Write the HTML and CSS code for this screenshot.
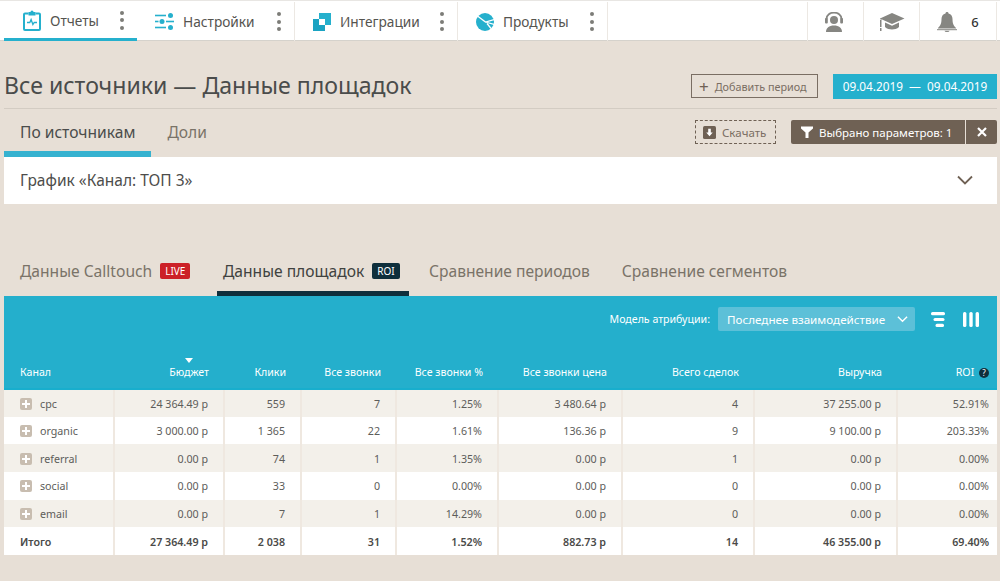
FILE: index.html
```html
<!DOCTYPE html>
<html lang="ru">
<head>
  <meta charset="UTF-8">
  <title>Все источники — Данные площадок</title>
  <link rel="stylesheet" href="styles.css">
</head>
<body>

  <!-- Top menu -->
  <nav class="topbar">
    <div class="menu-item menu-active w-reports">
      <svg class="menu-icon" viewBox="0 0 18 21" width="18" height="21"><path d="M5.500 3.500H2a1 1 0 0 0-1 1V19a1 1 0 0 0 1 1h14a1 1 0 0 0 1-1V4.500a1 1 0 0 0-1-1h-3.500" fill="none" stroke="#25b0cd" stroke-width="2"/><path d="M5.500 2h2a1.500 1.500 0 0 1 3 0h2v3.500h-7z" fill="#25b0cd"/><path d="M4 12.500h2.800l1.300-3 1.800 5 1.300-2h2.800" fill="none" stroke="#25b0cd" stroke-width="1.300"/></svg>
      <span class="menu-label">Отчеты</span>
      <span class="dots"><i></i><i></i><i></i></span>
    </div>
    <div class="menu-item w-settings">
      <svg class="menu-icon" viewBox="0 0 19 17" width="19" height="17"><g fill="#25b0cd"><rect x="0" y="1.700" width="11" height="1.600"/><circle cx="15.500" cy="2.500" r="2.500"/><rect x="0" y="7.700" width="3.500" height="1.600"/><circle cx="7" cy="8.500" r="2.500"/><rect x="11" y="7.700" width="8" height="1.600"/><rect x="0" y="13.700" width="11" height="1.600"/><circle cx="15.500" cy="14.500" r="2.500"/></g></svg>
      <span class="menu-label">Настройки</span>
      <span class="dots"><i></i><i></i><i></i></span>
    </div>
    <div class="menu-item w-integr">
      <svg class="menu-icon" viewBox="0 0 18 18" width="18" height="18"><path d="M6 0h12v12h-6V6H6z" fill="#25b0cd"/><path d="M0 6h6v6h6v6H0z" fill="#1aa3c2"/></svg>
      <span class="menu-label">Интеграции</span>
      <span class="dots"><i></i><i></i><i></i></span>
    </div>
    <div class="menu-item w-products">
      <svg class="menu-icon" viewBox="0 0 18 18" width="18" height="18"><circle cx="9" cy="9" r="9" fill="#25b0cd"/><path d="M1.500 3 9.500 9 18 6.500M9.500 9 18 11.500M11 10.500 15.500 16" fill="none" stroke="#fff" stroke-width="1.300"/></svg>
      <span class="menu-label">Продукты</span>
      <span class="dots"><i></i><i></i><i></i></span>
    </div>
    <div class="menu-spacer"></div>
    <div class="menu-tool menu-agent">
      <svg viewBox="0 0 20 20" width="20" height="20"><g fill="#868682"><circle cx="10" cy="8" r="4"/><path d="M2 20c0-4 3-6.500 8-6.500s8 2.500 8 6.500z"/><rect x="1" y="6" width="2.800" height="5.500" rx="1"/><rect x="16.200" y="6" width="2.800" height="5.500" rx="1"/></g><path d="M2.500 7c0-8.500 15-8.500 15 0" fill="none" stroke="#868682" stroke-width="1.800"/></svg>
    </div>
    <div class="menu-tool">
      <svg viewBox="0 0 26 20" width="26" height="20"><g fill="#868682"><path d="M13 1 25.500 6.500 13 12 2.500 7.300V8L1 7V6.500z"/><path d="M6 10.500 13 13.700l7-3.200V15c-2 1.800-4.500 2.500-7 2.500S8 16.800 6 15z"/><rect x="1" y="8" width="1.500" height="7"/><rect x="1" y="16" width="1.500" height="3"/></g></svg>
    </div>
    <div class="menu-tool menu-bell">
      <svg viewBox="0 0 20 20" width="20" height="20"><g fill="#868682"><path d="M10 0c1 0 1.500.6 1.500 1.400 2.800.7 4 3 4 5.600 0 4.500 1 6.500 3.500 9v.5H1V16c2.500-2.500 3.500-4.500 3.500-9 0-2.600 1.200-4.900 4-5.600C8.500.6 9 0 10 0z"/><rect x="0" y="17.200" width="20" height="1"/><path d="M7.500 18.700h5a2.500 1.300 0 0 1-5 0z"/></g></svg>
      <span class="bell-count">6</span>
    </div>
  </nav>

  <!-- Page title -->
  <header class="title-row">
    <h1>Все источники — Данные площадок</h1>
    <button class="btn-period"><span class="plus">+</span>Добавить период</button>
    <div class="date-range">09.04.2019 &nbsp;—&nbsp; 09.04.2019</div>
  </header>

  <div class="subtabs-row">
    <a class="subtab subtab-active">По источникам</a>
    <a class="subtab">Доли</a>
    <div class="subtabs-right">
      <button class="btn-download">
        <svg viewBox="0 0 12 12" width="13" height="13"><rect width="12" height="12" rx="1.500" fill="#6f6154"/><path d="M4.800 2.500h2.400v3.500h1.800L6 9.500 3 6h1.800z" fill="#fff"/></svg>
        Скачать
      </button>
      <div class="filter-chip">
        <span class="filter-label">
          <svg viewBox="0 0 12 12" width="12" height="12"><path d="M0 .5h12v2L7.500 6.500V12h-3V6.500L0 2.500z" fill="#fff"/></svg>
          Выбрано параметров: 1
        </span>
        <span class="filter-close">
          <svg viewBox="0 0 10 10" width="10" height="10"><path d="M1 1l8 8M9 1l-8 8" stroke="#fff" stroke-width="2.200"/></svg>
        </span>
      </div>
    </div>
  </div>

  <section class="chart-card">
    <span class="chart-title">График «Канал: ТОП 3»</span>
    <svg viewBox="0 0 16 10" width="16" height="10"><path d="M1 1.500l7 7 7-7" fill="none" stroke="#6f6154" stroke-width="1.800"/></svg>
  </section>

  <!-- Data tabs -->
  <div class="data-tabs">
    <a class="data-tab t-calltouch">Данные Calltouch <span class="badge badge-live">LIVE</span></a>
    <a class="data-tab data-tab-active t-places">Данные площадок <span class="badge badge-roi">ROI</span></a>
    <a class="data-tab">Сравнение периодов</a>
    <a class="data-tab">Сравнение сегментов</a>
  </div>

  <section class="panel">
    <div class="panel-tools">
      <span class="model-label">Модель атрибуции:</span>
      <div class="model-select">
        Последнее взаимодействие
        <svg viewBox="0 0 12 8" width="11" height="8"><path d="M1 1.500l5 5 5-5" fill="none" stroke="#fff" stroke-width="1.500"/></svg>
      </div>
      <svg class="tool-icon" viewBox="0 0 14 15" width="14" height="15"><g fill="#fff"><rect x="0" y="0" width="14" height="3.200" rx="1.500"/><rect x="2.500" y="5.900" width="11" height="3.200" rx="1.500"/><rect x="4.500" y="11.800" width="8.500" height="3.200" rx="1.500"/></g></svg>
      <svg class="tool-icon" viewBox="0 0 16 15" width="16" height="15"><g fill="#fff"><rect x="0" y="0" width="3.400" height="15" rx="1.500"/><rect x="6.300" y="0" width="3.400" height="15" rx="1.500"/><rect x="12.600" y="0" width="3.400" height="15" rx="1.500"/></g></svg>
    </div>

    <table class="stats">
      <colgroup>
        <col class="c1"><col class="c2"><col class="c3"><col class="c4"><col class="c5">
        <col class="c6"><col class="c7"><col class="c8"><col class="c9">
      </colgroup>
      <thead>
        <tr>
          <th class="left">Канал</th>
          <th class="sorted">Бюджет</th>
          <th>Клики</th>
          <th>Все звонки</th>
          <th>Все звонки %</th>
          <th>Все звонки цена</th>
          <th>Всего сделок</th>
          <th>Выручка</th>
          <th>ROI <span class="help">?</span></th>
        </tr>
      </thead>
      <tbody>
        <tr>
          <td class="left"><span class="expand"></span>cpc</td>
          <td>24 364.49 р</td><td>559</td><td>7</td><td>1.25%</td><td>3 480.64 р</td><td>4</td><td>37 255.00 р</td><td>52.91%</td>
        </tr>
        <tr>
          <td class="left"><span class="expand"></span>organic</td>
          <td>3 000.00 р</td><td>1 365</td><td>22</td><td>1.61%</td><td>136.36 р</td><td>9</td><td>9 100.00 р</td><td>203.33%</td>
        </tr>
        <tr>
          <td class="left"><span class="expand"></span>referral</td>
          <td>0.00 р</td><td>74</td><td>1</td><td>1.35%</td><td>0.00 р</td><td>1</td><td>0.00 р</td><td>0.00%</td>
        </tr>
        <tr>
          <td class="left"><span class="expand"></span>social</td>
          <td>0.00 р</td><td>33</td><td>0</td><td>0.00%</td><td>0.00 р</td><td>0</td><td>0.00 р</td><td>0.00%</td>
        </tr>
        <tr>
          <td class="left"><span class="expand"></span>email</td>
          <td>0.00 р</td><td>7</td><td>1</td><td>14.29%</td><td>0.00 р</td><td>0</td><td>0.00 р</td><td>0.00%</td>
        </tr>
      </tbody>
      <tfoot>
        <tr>
          <td class="left">Итого</td>
          <td>27 364.49 р</td><td>2 038</td><td>31</td><td>1.52%</td><td>882.73 р</td><td>14</td><td>46 355.00 р</td><td>69.40%</td>
        </tr>
      </tfoot>
    </table>
  </section>

</body>
</html>
```

FILE: styles.css
```css
* {
  box-sizing: border-box;
}
html, body {
  height: 100%;
}
body {
  margin: 0;
  padding: 0 3px 0 4px;
  background-color: #e7dfd6;
  font-family: "Noto Sans", "Open Sans", sans-serif;
  color: #4a4a48;
  overflow: hidden;
}
button {
  font-family: inherit;
}

/* top menu */
.topbar {
  display: flex;
  height: 41px;
  margin: 0 -3px 0 -4px;
  padding: 1px 0 0 4px;
  background-color: #fff;
  border-top: 1px solid #e8e6e3;
  border-bottom: 1px solid #d5d2cc;
}
.menu-item {
  display: flex;
  align-items: center;
  height: 39px;
  padding-left: 19px;
  border-right: 1px solid #ece8e3;
}
.w-reports { width: 133px; }
.w-settings { width: 158px; padding-left: 18px; }
.w-integr { width: 163px; padding-left: 18px; }
.w-products { width: 150px; padding-left: 18px; }
.menu-active {
  border-bottom: 3px solid #25b0cd;
  border-right: 0;
}
.menu-icon {
  flex: none;
  margin-right: 9px;
}
.menu-label {
  font-size: 13.700px;
  color: #55544f;
  flex: 1;
}
.dots {
  display: flex;
  flex-direction: column;
  gap: 3.500px;
  margin-right: 13px;
}
.dots i {
  width: 4px;
  height: 4px;
  border-radius: 50%;
  background-color: #7c7c78;
}
.menu-spacer {
  flex: 1;
}
.menu-tool {
  display: flex;
  align-items: center;
  justify-content: center;
  width: 56px;
  height: 39px;
  border-left: 1px solid #ece8e3;
}
.menu-agent {
  padding-right: 3px;
}
.menu-bell {
  width: 78px;
  margin-right: 3px;
  gap: 14px;
  border-right: 1px solid #ece8e3;
}
.bell-count {
  font-size: 13px;
  font-weight: 500;
  color: #333;
}

/* page title */
.title-row {
  display: flex;
  align-items: center;
  height: 68px;
  padding-top: 23px;
  border-bottom: 1px solid #d3ccc3;
}
h1 {
  flex: 1;
  margin: 0 0 3px;
  font-size: 23.100px;
  font-weight: 400;
  color: #4a4c4b;
}
.btn-period {
  display: flex;
  align-items: center;
  width: 127px;
  height: 24px;
  margin-right: 15px;
  padding: 0 0 0 7px;
  background: none;
  border: 1px solid #7a6e63;
  color: #7a6e63;
  font-size: 10.800px;
}
.plus {
  font-size: 17px;
  line-height: 1;
  margin-right: 6px;
  color: #6f6154;
}
.date-range {
  width: 164px;
  height: 25px;
  line-height: 25px;
  text-align: center;
  background-color: #25b0cd;
  color: #fff;
  font-size: 11.800px;
}

/* sub tabs */
.subtabs-row {
  display: flex;
  height: 48px;
}
.subtab {
  height: 48px;
  padding: 12px 16px 0;
  font-size: 15.600px;
  color: #7a7368;
}
.subtab-active {
  color: #4a4c4b;
  border-bottom: 6px solid #36b2d0;
}
.subtabs-right {
  display: flex;
  align-items: flex-start;
  margin-left: auto;
  padding-top: 11px;
}
.btn-download {
  display: flex;
  align-items: center;
  gap: 6px;
  width: 81px;
  height: 24px;
  margin-right: 15px;
  padding: 0 0 0 7px;
  background: none;
  border: 1px dashed #6f6154;
  color: #7a6e63;
  font-size: 11.500px;
}
.filter-chip {
  display: flex;
  height: 24px;
  color: #fff;
  font-size: 11.500px;
}
.filter-label {
  display: flex;
  align-items: center;
  gap: 6px;
  width: 174px;
  padding-left: 10px;
  background-color: #6f6154;
  border-radius: 2px 0 0 2px;
}
.filter-close {
  display: flex;
  align-items: center;
  justify-content: center;
  width: 31px;
  margin-left: 1px;
  background-color: #6f6154;
  border-radius: 0 2px 2px 0;
}

/* chart card */
.chart-card {
  display: flex;
  align-items: center;
  justify-content: space-between;
  height: 47px;
  padding: 0 24px 2px 16px;
  background-color: #fff;
  font-size: 15.500px;
  color: #4d4d4b;
}

/* data tabs */
.data-tabs {
  display: flex;
  height: 46px;
  margin-top: 46px;
}
.data-tab {
  display: flex;
  align-items: flex-start;
  gap: 8px;
  height: 46px;
  padding: 10px 16px 0;
  font-size: 15.600px;
  color: #7a7368;
}
.t-calltouch { width: 213px; }
.t-places { width: 192px; padding-left: 6px; padding-right: 0; margin-right: 4px; }
.data-tab-active {
  color: #404240;
  border-bottom: 5px solid #0f2f3c;
}
.badge {
  padding: 0 5px;
  height: 16px;
  line-height: 16px;
  margin-top: 3px;
  border-radius: 2px;
  color: #fff;
  font-size: 10px;
}
.badge-live {
  background-color: #cc2027;
}
.badge-roi {
  background-color: #0f2f3c;
}

/* blue panel + table */
.panel {
  background-color: #24afcc;
}
.panel-tools {
  display: flex;
  align-items: center;
  justify-content: flex-end;
  height: 46px;
  padding: 0 18px 0 0;
  color: #fff;
}
.model-label {
  font-size: 10.600px;
  margin-right: 8px;
}
.model-select {
  display: flex;
  align-items: center;
  justify-content: space-between;
  width: 197px;
  height: 24px;
  margin-right: 16px;
  padding: 0 7px 0 9px;
  background-color: #5cc0d8;
  border-radius: 2px;
  font-size: 11.650px;
}
.tool-icon + .tool-icon {
  margin-left: 18px;
}
.stats {
  width: 100%;
  table-layout: fixed;
  border-collapse: collapse;
  font-size: 10.700px;
}
.c1 { width: 110px; }
.c2 { width: 110px; }
.c3 { width: 77px; }
.c4 { width: 95px; }
.c5 { width: 102px; }
.c6 { width: 124px; }
.c7 { width: 132px; }
.c8 { width: 143px; }
.stats th {
  height: 47px;
  padding: 14px 8px 0 0;
  text-align: right;
  font-weight: 400;
  font-size: 10.600px;
  color: #fff;
  border-bottom: 2px solid #18aecd;
}
.stats th.left,
.stats td.left {
  padding-left: 16px;
  text-align: left;
}
.stats th:not(:last-child) {
  padding-right: 15px;
}
.stats th.sorted {
  position: relative;
}
.stats th.sorted::after {
  content: "";
  position: absolute;
  top: 16px;
  right: 31px;
  border-left: 4.500px solid transparent;
  border-right: 4.500px solid transparent;
  border-top: 5px solid #fff;
}
.help {
  display: inline-block;
  width: 10px;
  height: 10px;
  line-height: 10px;
  margin-left: 2px;
  border-radius: 50%;
  background-color: #0f2f3c;
  text-align: center;
  font-size: 8px;
}
.stats td {
  height: 27.700px;
  padding: 1px 15px 0 0;
  text-align: right;
  color: #5d5d5a;
  background-color: #fff;
  border-right: 2px solid #efe8e0;
}
.stats td:last-child {
  padding-right: 8px;
  border-right: 0;
}
.stats tbody tr:nth-child(odd) td {
  background-color: #f3f0ea;
}
.stats tfoot td {
  height: 28px;
  font-weight: 600;
  color: #4a4a48;
}
.expand {
  display: inline-block;
  position: relative;
  width: 12px;
  height: 12px;
  margin-right: 8px;
  vertical-align: -2px;
  border-radius: 2px;
  background-color: #c8bdb0;
}
.expand::before,
.expand::after {
  content: "";
  position: absolute;
  background-color: #fff;
}
.expand::before {
  left: 2px;
  top: 5px;
  width: 8px;
  height: 2px;
}
.expand::after {
  left: 5px;
  top: 2px;
  width: 2px;
  height: 8px;
}
```
